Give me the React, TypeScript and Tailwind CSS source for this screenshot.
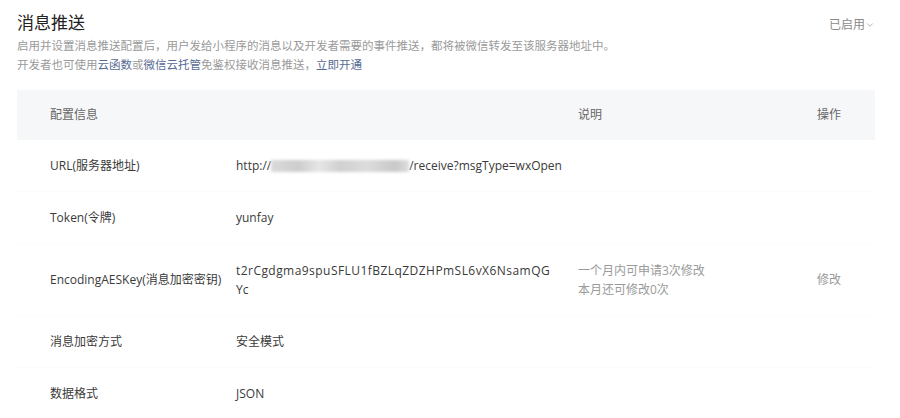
import { ChevronDown } from 'lucide-react';

type Row = {
  label: string;
  value: React.ReactNode;
  note?: React.ReactNode;
  action?: string;
  tall?: boolean;
};

const rows: Row[] = [
  {
    label: 'URL(服务器地址)',
    value: (
      <span className="flex items-center">
        http://
        <span className="inline-block h-[12px] w-[138px] bg-[linear-gradient(90deg,#dadada,#cdcdcd_20%,#e6e6e6_35%,#d0d0d0_50%,#dcdcdc_70%,#c8c8c8_90%,#dedede)] blur-[1.5px]" />
        /receive?msgType=wxOpen
      </span>
    ),
  },
  { label: 'Token(令牌)', value: 'yunfay' },
  {
    label: 'EncodingAESKey(消息加密密钥)',
    value: (
      <>
        <span className="tracking-[0.45px]">t2rCgdgma9spuSFLU1fBZLqZDZHPmSL6vX6NsamQG</span>
        <br />
        Yc
      </>
    ),
    note: (
      <>
        一个月内可申请3次修改
        <br />
        本月还可修改0次
      </>
    ),
    action: '修改',
    tall: true,
  },
  { label: '消息加密方式', value: '安全模式' },
  { label: '数据格式', value: 'JSON' },
];

export default function App() {
  return (
    <div
      className="h-[418px] w-[900px] overflow-hidden bg-white text-[#3a3a3a]"
      style={{ fontFamily: '"Open Sans", "Noto Sans CJK SC", sans-serif' }}
    >
      <div className="flex items-start justify-between pl-[17px] pr-[25px] pt-[10px]">
        <h1 className="text-[17px] leading-[26px] text-[#222]">消息推送</h1>
        <button className="mt-[6px] flex items-center text-[12px] text-[#8a8a8a]">
          已启用
          <ChevronDown size={10} strokeWidth={1.5} />
        </button>
      </div>
      <div className="pl-[17px] text-[11.5px] leading-[19px] text-[#9a9a9a]">
        <p>启用并设置消息推送配置后，用户发给小程序的消息以及开发者需要的事件推送，都将被微信转发至该服务器地址中。</p>
        <p>
          开发者也可使用<a className="text-[#576b95]">云函数</a>或<a className="text-[#576b95]">微信云托管</a>
          免鉴权接收消息推送，<a className="text-[#576b95]">立即开通</a>
        </p>
      </div>

      <div className="ml-[17px] mt-[16px] w-[858px] text-[12px]">
        <div className="grid h-[50px] grid-cols-[186px_342px_239px_1fr] items-center bg-[#f6f7f9] pl-[33px] text-[#666]">
          <span>配置信息</span>
          <span />
          <span>说明</span>
          <span>操作</span>
        </div>
        {rows.map((row) => (
          <div
            key={row.label}
            className={`grid grid-cols-[186px_342px_239px_1fr] items-center border-b border-[#fcfcfc] pl-[33px] ${
              row.tall ? 'h-[72px]' : 'h-[52px]'
            }`}
          >
            <span>{row.label}</span>
            <span className="leading-[19px]">{row.value}</span>
            <span className="leading-[19px] text-[#9a9a9a]">{row.note}</span>
            <span className="text-[#9a9a9a]">{row.action}</span>
          </div>
        ))}
      </div>
    </div>
  );
}
